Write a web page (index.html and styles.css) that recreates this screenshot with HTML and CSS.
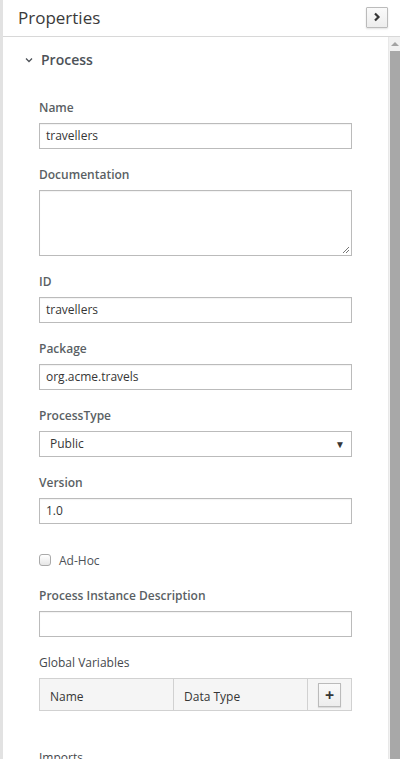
FILE: index.html
```html
<!DOCTYPE html>
<html>
<head>
<meta charset="utf-8">
<link rel="stylesheet" href="styles.css">
</head>
<body>
<div class="panel">
  <div class="header">
    <span class="title">Properties</span>
    <button class="collapse-btn" aria-label="collapse">
      <svg width="8" height="10" viewBox="0 0 8 10"><path d="M2 1.5 L5.5 5 L2 8.5" fill="none" stroke="#363636" stroke-width="2.2"/></svg>
    </button>
  </div>
  <div class="body">
    <div class="content">
      <div class="section-head">
        <svg class="chev" width="8" height="6" viewBox="0 0 8 6"><path d="M1 1.5 L4 4.5 L7 1.5" fill="none" stroke="#4d5258" stroke-width="1.3"/></svg>
        <span>Process</span>
      </div>
      <div class="form">
        <div class="group">
          <label class="lbl">Name</label>
          <div class="input">travellers</div>
        </div>
        <div class="group">
          <label class="lbl">Documentation</label>
          <div class="input textarea">
            <svg class="grip" width="8" height="8" viewBox="0 0 8 8"><path d="M7 1 L1 7 M7 4 L4 7" stroke="#777" stroke-width="1"/></svg>
          </div>
        </div>
        <div class="group">
          <label class="lbl">ID</label>
          <div class="input">travellers</div>
        </div>
        <div class="group">
          <label class="lbl">Package</label>
          <div class="input">org.acme.travels</div>
        </div>
        <div class="group">
          <label class="lbl">ProcessType</label>
          <div class="input select"><span>Public</span><span class="caret">▼</span></div>
        </div>
        <div class="group">
          <label class="lbl">Version</label>
          <div class="input">1.0</div>
        </div>
        <div class="check-row">
          <span class="checkbox"></span>
          <span class="check-lbl">Ad-Hoc</span>
        </div>
        <div class="group">
          <label class="lbl">Process Instance Description</label>
          <div class="input"></div>
        </div>
        <div class="group">
          <label class="lbl light">Global Variables</label>
          <div class="table">
            <div class="th c1">Name</div>
            <div class="th c2">Data Type</div>
            <div class="th c3"><button class="add-btn">+</button></div>
          </div>
        </div>
        <div class="group imports">
          <label class="lbl light">Imports</label>
        </div>
      </div>
    </div>
    <div class="scrollbar">
      <div class="arrow"></div>
      <div class="thumb"></div>
    </div>
  </div>
</div>
</body>
</html>
```
FILE: styles.css
```css
* { box-sizing: border-box; }
html, body { margin: 0; padding: 0; height: 100%; overflow: hidden; background: #fff; }
body { font-family: "Open Sans", "Noto Sans", sans-serif; color: #363636; }

.panel {
  height: 759px;
  border-left: 3px solid #e2e2e2;
  display: flex;
  flex-direction: column;
}
.header {
  height: 37px;
  border-bottom: 1px solid #d8d8d8;
  display: flex;
  align-items: center;
  justify-content: space-between;
  padding: 0 12px 0 15px;
  flex: none;
}
.title {
  font-size: 17px;
  color: #3a3a3a;
  margin-top: -1px;
}
.collapse-btn {
  width: 22px;
  height: 21px;
  margin-top: -2px;
  border: 1px solid #bbb;
  border-radius: 1px;
  background: linear-gradient(#fafafa, #ededed);
  box-shadow: 0 1px 2px rgba(0,0,0,0.12);
  display: flex;
  align-items: center;
  justify-content: center;
  padding: 0;
}
.body {
  flex: 1;
  display: flex;
  min-height: 0;
}
.content {
  flex: 1;
  padding: 0 36px 0 22px;
  overflow: hidden;
}
.section-head {
  display: flex;
  align-items: center;
  height: 44px;
  font-size: 14px;
  font-weight: 600;
  color: #4d5258;
}
.chev { margin-right: 8px; margin-top: 1px; }
.form { padding-left: 14px; padding-top: 18px; }
.group { margin-bottom: 17px; }
.lbl {
  display: block;
  font-size: 12px;
  font-weight: 600;
  line-height: 18px;
  margin-bottom: 6px;
  color: #5a5f64;
}
.lbl.light { font-weight: 400; color: #44484c; }
.input {
  height: 26px;
  border: 1px solid #bbb;
  font-size: 12px;
  line-height: 24px;
  padding: 0 6px;
  color: #363636;
  background: #fff;
  box-shadow: inset 0 1px 1px rgba(0,0,0,0.05);
}
.textarea { height: 66px; position: relative; }
.grip { position: absolute; right: 1px; bottom: 1px; }
.select {
  display: flex;
  justify-content: space-between;
  align-items: center;
  padding: 0 6px 0 10px;
  box-shadow: none;
}
.caret { font-size: 10px; color: #363636; }
.check-row {
  display: flex;
  align-items: center;
  height: 20px;
  margin-top: 26px;
  margin-bottom: 17px;
}
.checkbox {
  width: 12px;
  height: 12px;
  border: 1px solid #aaa;
  border-radius: 3px;
  background: linear-gradient(#fff, #e6e6e6);
  margin-right: 8px;
}
.check-lbl { font-size: 12px; color: #4d5258; }
.table {
  display: grid;
  grid-template-columns: 134px 134px 1fr;
  border: 1px solid #d1d1d1;
  background: #f5f5f5;
  height: 33px;
}
.th {
  font-size: 12px;
  display: flex;
  align-items: center;
  padding-left: 10px;
  padding-top: 3px;
  color: #363636;
}
.c1, .c2 { border-right: 1px solid #d1d1d1; }
.c3 { justify-content: center; padding-left: 0; padding-top: 0; }
.add-btn {
  width: 23px;
  height: 24px;
  border: 1px solid #bbb;
  background: linear-gradient(#fafafa, #ededed);
  box-shadow: 0 1px 1px rgba(0,0,0,0.1);
  font-family: "Open Sans", sans-serif;
  font-size: 16px;
  font-weight: 700;
  color: #363636;
  line-height: 20px;
  padding: 0;
}
.imports { margin-top: 38px; }

.scrollbar {
  width: 12px;
  flex: none;
  background: #f1f1f1;
  border-left: 1px solid #e8e8e8;
  display: flex;
  flex-direction: column;
}
.arrow {
  height: 14px;
  display: flex;
  justify-content: center;
  align-items: center;
}
.arrow::before {
  content: "";
  border-left: 4px solid transparent;
  border-right: 4px solid transparent;
  border-bottom: 4px solid #a3a3a3;
  margin-left: 1px;
}
.thumb {
  flex: 1;
  background: #a8a8a8;
  margin-left: 1px;
}
```
